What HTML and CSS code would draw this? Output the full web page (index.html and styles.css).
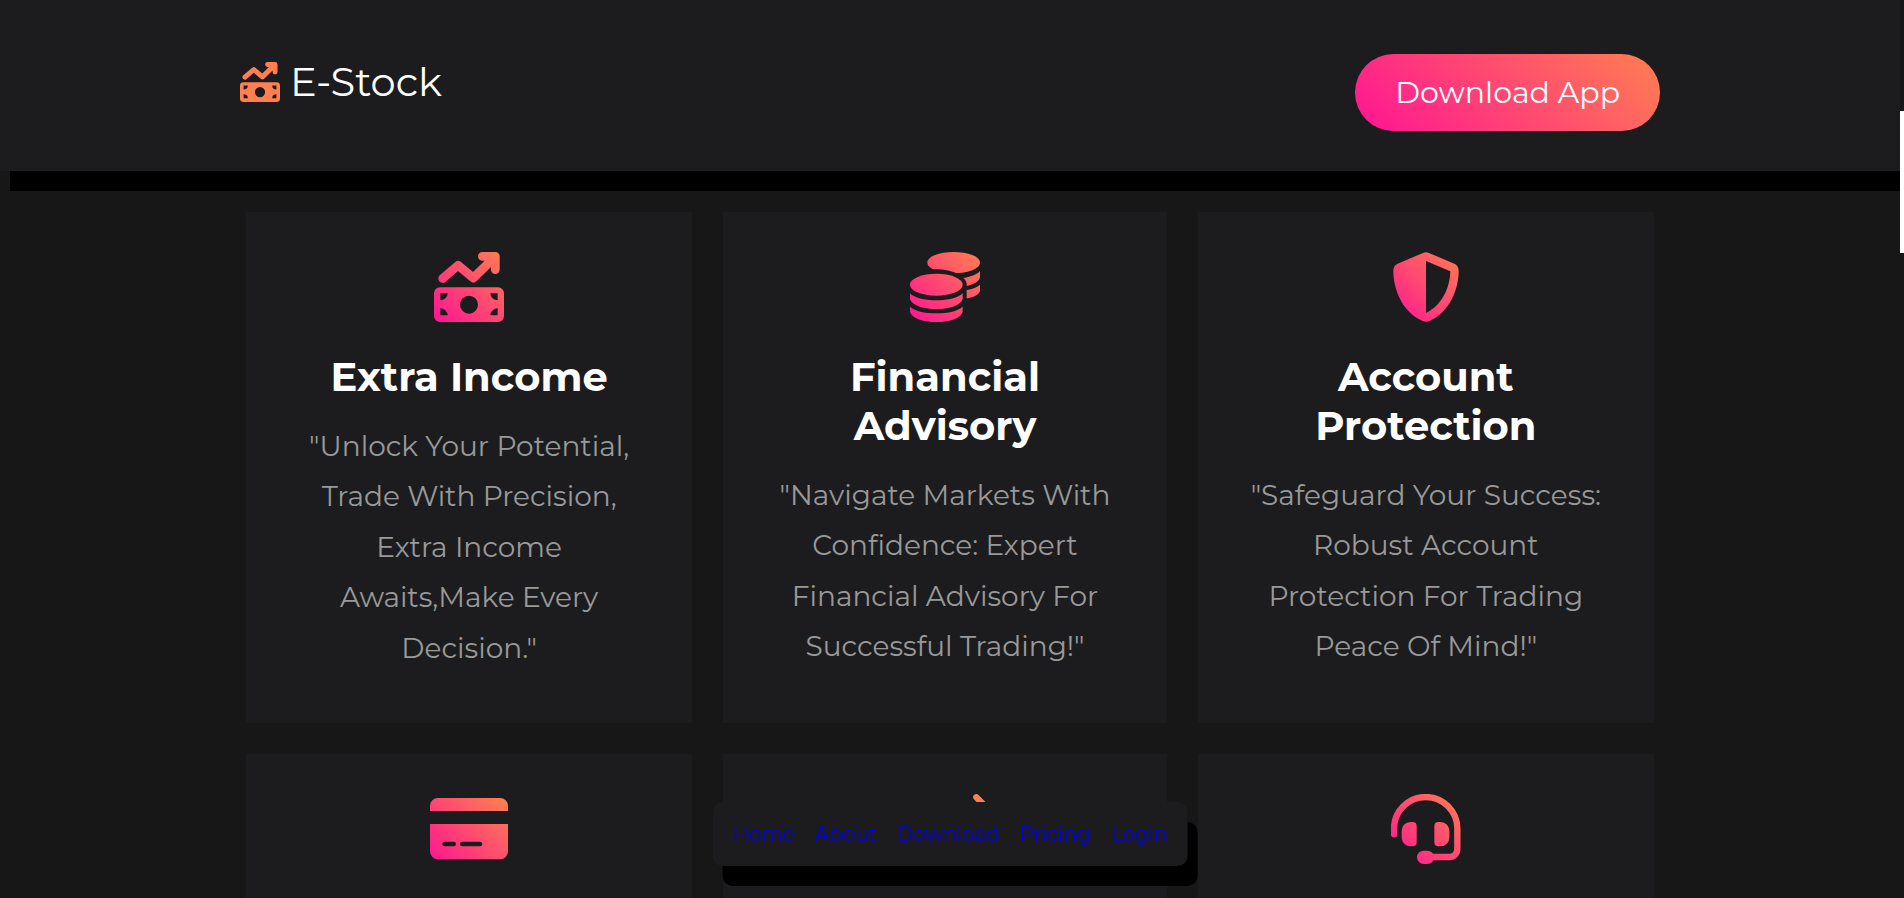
FILE: index.html
```html
<!DOCTYPE html>
<html lang="en">
<head>
<meta charset="utf-8">
<meta name="viewport" content="width=device-width, initial-scale=1">
<title>E-Stock</title>
<link rel="stylesheet" href="styles.css">
</head>
<body>
<svg class="defs" aria-hidden="true">
  <defs>
    <linearGradient id="glow" gradientUnits="userSpaceOnUse" x1="0" y1="210" x2="210" y2="0">
      <stop offset="0" stop-color="#ff1493"/><stop offset="1" stop-color="#ff7f50"/>
    </linearGradient>
    <symbol id="money" viewBox="0 0 210 210">
      <path fill-rule="evenodd" d="M18 106H192a18 18 0 0 1 18 18V192a18 18 0 0 1-18 18H18a18 18 0 0 1-18-18V124a18 18 0 0 1 18-18ZM105 131a27 27 0 1 0 0 54 27 27 0 0 0 0-54ZM19 124v21a22 21 0 0 0 22-21ZM191 124h-22a22 21 0 0 0 22 21ZM19 190h22a22 21 0 0 0-22-21ZM191 190v-21a22 21 0 0 0-22 21Z"/>
      <path d="M145 0H184a13 13 0 0 1 13 13V53a13 13 0 0 1-26 0V45L127 88a13 13 0 0 1-18 0L72 57 35 89A13 13 0 0 1 17 70L64 30a13 13 0 0 1 17 0L117 60 152 26H145a13 13 0 0 1 0-26Z"/>
    </symbol>
  </defs>
</svg>

<header class="header">
  <div class="header-inner">
    <div class="brand">
      <svg class="brand-icon" viewBox="0 0 210 210" aria-hidden="true"><use href="#money"/></svg>
      <span>E-Stock</span>
    </div>
    <button class="download" type="button">Download App</button>
  </div>
</header>

<main class="cards">
  <article class="card">
    <svg class="icon" viewBox="0 0 210 210" aria-hidden="true"><use href="#money"/></svg>
    <h2>Extra Income</h2>
    <p>"Unlock Your Potential, Trade With Precision, Extra Income Awaits,Make Every Decision."</p>
  </article>
  <article class="card">
    <svg class="icon" viewBox="0 0 210 210" aria-hidden="true">
      <ellipse cx="131" cy="32" rx="79" ry="32"/>
      <ellipse class="cut" cx="79" cy="98" rx="92" ry="46"/>
      <path d="M160 78C184 74 202 67 210 57V76C208 88 192 97 170 102 171 93 168 84 160 78ZM170 114C188 111 202 106 210 98V116C208 127 192 136 170 139Z"/>
      <ellipse cx="79" cy="98" rx="79" ry="33"/>
      <path d="M0 124C14 138 42 145 79 145S144 138 158 124V140C154 158 120 171 79 171S4 158 0 140ZM0 164C14 177 42 184 79 184S144 177 158 164V179C154 197 120 210 79 210S4 197 0 179Z"/>
    </svg>
    <h2>Financial Advisory</h2>
    <p>"Navigate Markets With Confidence: Expert Financial Advisory For Successful Trading!"</p>
  </article>
  <article class="card">
    <svg class="icon" viewBox="0 0 210 210" aria-hidden="true">
      <path fill-rule="evenodd" d="M98 2 20 35C12 38 7 46 7 56 7 110 32 178 95 207Q105 211 115 207C178 178 203 110 203 56 203 46 198 38 190 35L112 2Q105-1 98 2ZM105 27 178 58C177 110 150 162 105 183Z"/>
    </svg>
    <h2>Account Protection</h2>
    <p>"Safeguard Your Success: Robust Account Protection For Trading Peace Of Mind!"</p>
  </article>
  <article class="card">
    <svg class="icon" viewBox="0 0 234 210" aria-hidden="true">
      <path fill-rule="evenodd" d="M0 51V36A24 24 0 0 1 24 12H210a24 24 0 0 1 24 24V51ZM0 90H234V172a24 24 0 0 1-24 24H24A24 24 0 0 1 0 172ZM44 143a7 7 0 0 0 0 14H71a7 7 0 0 0 0-14ZM97 143a7 7 0 0 0 0 14H150a7 7 0 0 0 0-14Z"/>
    </svg>
  </article>
  <article class="card">
    <svg class="icon" viewBox="0 0 262 210" aria-hidden="true">
      <path class="line" d="M140 36H248M226 10 252 36 226 62M122 174H12M38 148 12 174 38 200"/>
      <path fill-rule="evenodd" d="M40 26H118V50H210V158H144V184H40ZM131 73a32 32 0 1 0 0 64 32 32 0 0 0 0-64Z"/>
    </svg>
  </article>
  <article class="card">
    <svg class="icon" viewBox="0 0 210 210" aria-hidden="true">
      <path class="line" d="M9 121V104A95 95 0 0 1 199 104V165A24 24 0 0 1 175 189H115"/>
      <path d="M58 84H65A12 12 0 0 1 77 96V145A12 12 0 0 1 65 157H58A26 26 0 0 1 32 131V110A26 26 0 0 1 58 84ZM142 84H149A26 26 0 0 1 175 110V131A26 26 0 0 1 149 157H142A12 12 0 0 1 130 145V96A12 12 0 0 1 142 84Z"/>
      <rect x="78" y="170" width="51" height="40" rx="20"/>
    </svg>
  </article>
</main>

<nav class="nav" aria-label="Main">
  <a href="#home">Home</a>
  <a href="#about">About</a>
  <a href="#download">Download</a>
  <a href="#pricing">Pricing</a>
  <a href="#login">Login</a>
</nav>
<div class="scrollbar" aria-hidden="true"><div class="thumb"></div></div>
</body>
</html>
```
FILE: styles.css
```css
* { box-sizing: border-box; }
body {
  margin: 0;
  padding-right: 4px;
  height: 100vh;
  overflow: hidden;
  background: #171717;
  color: #fff;
  font-family: Montserrat, Inter, sans-serif;
}
.defs { position: absolute; width: 0; height: 0; }
.header {
  position: relative;
  padding: 54px 32px 40px;
  background: #1c1c1e;
  box-shadow: 10px 20px 0 #000;
}
.header-inner {
  max-width: 1420px;
  margin: 0 auto;
  display: flex;
  justify-content: space-between;
  align-items: flex-start;
}
.brand {
  display: flex;
  align-items: center;
  gap: 10px;
  padding: 4px 0 20px;
  font-size: 40px;
  line-height: 48px;
  font-weight: 400;
}
.brand-icon { width: 40px; height: 40px; fill: #ff7f50; }
.download {
  padding: 20px 40px;
  border: 0;
  border-radius: 40px;
  background: linear-gradient(45deg, #ff1493, #ff7f50);
  color: #fff;
  font: inherit;
  font-size: 30px;
  line-height: 37px;
}
.cards {
  max-width: 1408px;
  margin: 41px auto 0;
  display: grid;
  grid-template-columns: 446fr 443fr 456fr;
  gap: 31px;
  grid-auto-rows: minmax(511px, auto);
}
.card {
  padding: 40px;
  background: #1c1c1e;
  text-align: center;
}
.icon { display: block; height: 70px; margin: 0 auto 30px; fill: url(#glow); }
.icon .cut { fill: #1c1c1e; }
.icon .line { fill: none; stroke: url(#glow); stroke-width: 19; stroke-linecap: round; stroke-linejoin: round; }
.card h2 { margin: 0 0 20px; font-size: 40px; line-height: 49px; font-weight: 700; }
.card p { margin: 0; font-size: 28px; line-height: 1.8; font-weight: 400; color: #999; }
.nav {
  position: fixed;
  left: calc(50% - 2px);
  bottom: 32px;
  transform: translateX(-50%);
  display: flex;
  gap: 20px;
  padding: 20px;
  border-radius: 10px;
  background: #1c1c1e;
  box-shadow: 10px 20px 0 #000;
  font-size: 20px;
  line-height: 24px;
  font-weight: 400;
}
.nav a { color: #00e; text-decoration: none; }
.scrollbar { position: fixed; top: 0; right: 0; bottom: 0; width: 4px; padding-top: 111px; background: #171717; }
.thumb { height: 142px; background: #fff; }
```
